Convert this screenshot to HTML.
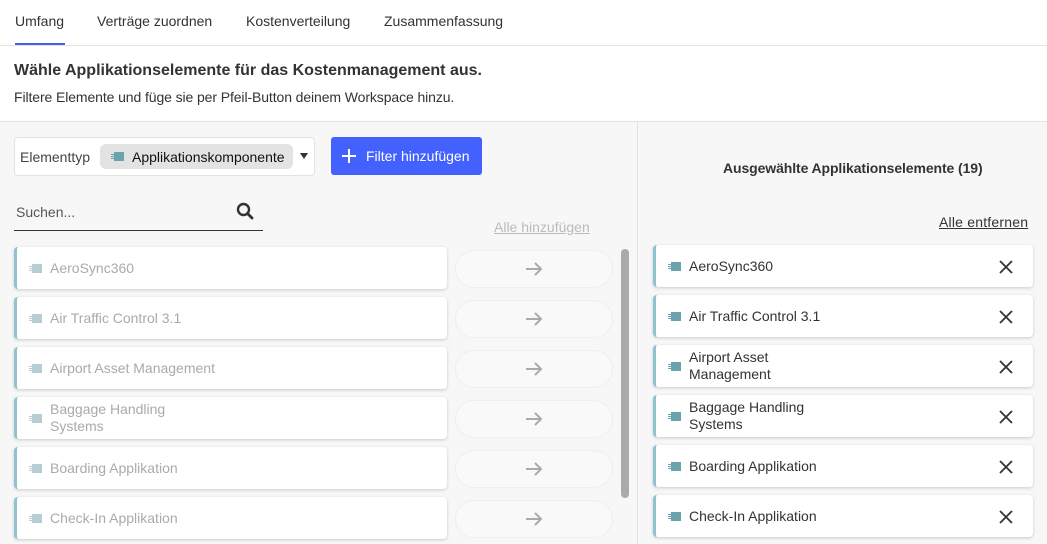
<!DOCTYPE html><html><head><style>
*{box-sizing:border-box;margin:0;padding:0}
body{width:1047px;height:544px;overflow:hidden;font-family:"Liberation Sans",sans-serif;background:#fff;position:relative;color:#333}
.a{position:absolute}
.tab{position:absolute;top:13px;font-size:14px;color:#333}
.card{position:absolute;background:#fff;border-radius:4px;box-shadow:0 1px 3px rgba(0,0,0,.18);border-left:3px solid #8fc3cf;height:42px;font-size:14px;display:flex;align-items:center}
.ic{display:inline-block;width:13px;height:9px;position:relative;margin-right:8px}
.ic:before{content:"";position:absolute;left:3px;top:0;width:10px;height:9px;background:currentColor}
.ic:after{content:"";position:absolute;left:0;top:2px;width:3px;height:1px;background:currentColor;box-shadow:0 2px 0 currentColor,0 4px 0 currentColor}
.pill{position:absolute;left:455px;width:158px;height:38px;border-radius:19px;border:1px solid #eee;background:#f9f9f9;display:flex;align-items:center;justify-content:center}
</style></head><body>
<div class="tab" style="left:15px">Umfang</div>
<div class="tab" style="left:97px">Verträge zuordnen</div>
<div class="tab" style="left:246px">Kostenverteilung</div>
<div class="tab" style="left:384px">Zusammenfassung</div>
<div class="a" style="left:15px;top:43px;width:50px;height:2px;background:#4361ee"></div>
<div class="a" style="left:0;top:45px;width:1047px;height:1px;background:#e3e3e3"></div>
<div class="a" style="left:14px;top:62px;font-size:16px;font-weight:bold;color:#333">Wähle Applikationselemente für das Kostenmanagement aus.</div>
<div class="a" style="left:14px;top:89px;font-size:14px;color:#333;letter-spacing:-0.1px">Filtere Elemente und füge sie per Pfeil-Button deinem Workspace hinzu.</div>
<div class="a" style="left:0;top:121px;width:1047px;height:423px;background:#f7f7f7;border-top:1px solid #e3e3e3"></div>
<div class="a" style="left:637px;top:121px;width:1px;height:423px;background:#e3e3e3"></div>
<div class="a" style="left:14px;top:137px;width:301px;height:39px;background:#fff;border:1px solid #e3e3e3;border-radius:4px"></div>
<div class="a" style="left:20px;top:149px;font-size:14px;color:#444">Elementtyp</div>
<div class="a" style="left:100px;top:144px;width:193px;height:25px;background:#e3e3e3;border-radius:6px;font-size:14px;color:#111;display:flex;align-items:center;padding-left:11px"><span class="ic" style="color:#6aa3ae"></span>Applikationskomponente</div>
<div class="a" style="left:300px;top:153px;width:0;height:0;border-left:4px solid transparent;border-right:4px solid transparent;border-top:6px solid #333"></div>
<div class="a" style="left:331px;top:137px;width:151px;height:38px;background:#4361ff;border-radius:3px;color:#fff;font-size:14px;display:flex;align-items:center;padding-left:10px"><svg width="16" height="16" style="margin-right:9px"><path d="M8 1V15M1 8H15" stroke="#fff" stroke-width="2"/></svg>Filter hinzufügen</div>
<div class="a" style="left:16px;top:204px;font-size:14px;color:#555">Suchen...</div>
<svg class="a" style="left:236px;top:202px" width="18" height="18" viewBox="0 0 18 18"><circle cx="7.5" cy="7.5" r="5.5" fill="none" stroke="#333" stroke-width="2.4"/><path d="M11.5 11.5L16 16" stroke="#333" stroke-width="2.8" stroke-linecap="round"/></svg>
<div class="a" style="left:14px;top:230px;width:249px;height:1px;background:#333"></div>
<div class="a" style="left:494px;top:219px;font-size:14px;color:#bbb;text-decoration:underline">Alle hinzufügen</div>
<div class="a" style="left:621px;top:249px;width:8px;height:249px;background:#aaa;border-radius:4px"></div>
<div class="a" style="left:723px;top:160px;font-size:14px;font-weight:bold;color:#333;letter-spacing:-0.1px">Ausgewählte Applikationselemente (19)</div>
<div class="a" style="left:939px;top:214px;font-size:14px;color:#333;text-decoration:underline;letter-spacing:0.2px">Alle entfernen</div>

<div class="card" style="left:14px;top:247px;width:433px;color:#aaa;padding-left:12px"><span class="ic" style="color:#b5ced3"></span>AeroSync360</div>
<div class="card" style="left:14px;top:297px;width:433px;color:#aaa;padding-left:12px"><span class="ic" style="color:#b5ced3"></span>Air Traffic Control 3.1</div>
<div class="card" style="left:14px;top:347px;width:433px;color:#aaa;padding-left:12px"><span class="ic" style="color:#b5ced3"></span>Airport Asset Management</div>
<div class="card" style="left:14px;top:397px;width:433px;color:#aaa;padding-left:12px;line-height:17px"><span class="ic" style="color:#b5ced3"></span>Baggage Handling<br>Systems</div>
<div class="card" style="left:14px;top:447px;width:433px;color:#aaa;padding-left:12px"><span class="ic" style="color:#b5ced3"></span>Boarding Applikation</div>
<div class="card" style="left:14px;top:497px;width:433px;color:#aaa;padding-left:12px"><span class="ic" style="color:#b5ced3"></span>Check-In Applikation</div>
<div class="pill" style="top:250px"><svg width="18" height="16"><path d="M1 8H16M10 2L16 8L10 14" fill="none" stroke="#aaa" stroke-width="2"/></svg></div>
<div class="pill" style="top:300px"><svg width="18" height="16"><path d="M1 8H16M10 2L16 8L10 14" fill="none" stroke="#aaa" stroke-width="2"/></svg></div>
<div class="pill" style="top:350px"><svg width="18" height="16"><path d="M1 8H16M10 2L16 8L10 14" fill="none" stroke="#aaa" stroke-width="2"/></svg></div>
<div class="pill" style="top:400px"><svg width="18" height="16"><path d="M1 8H16M10 2L16 8L10 14" fill="none" stroke="#aaa" stroke-width="2"/></svg></div>
<div class="pill" style="top:450px"><svg width="18" height="16"><path d="M1 8H16M10 2L16 8L10 14" fill="none" stroke="#aaa" stroke-width="2"/></svg></div>
<div class="pill" style="top:500px"><svg width="18" height="16"><path d="M1 8H16M10 2L16 8L10 14" fill="none" stroke="#aaa" stroke-width="2"/></svg></div>

<div class="card" style="left:653px;top:245px;width:380px;padding-left:12px;color:#333"><span class="ic" style="color:#6aa3ae"></span>AeroSync360</div>
<div class="card" style="left:653px;top:295px;width:380px;padding-left:12px;color:#333"><span class="ic" style="color:#6aa3ae"></span>Air Traffic Control 3.1</div>
<div class="card" style="left:653px;top:345px;width:380px;padding-left:12px;color:#333;line-height:17px"><span class="ic" style="color:#6aa3ae"></span>Airport Asset<br>Management</div>
<div class="card" style="left:653px;top:395px;width:380px;padding-left:12px;color:#333;line-height:17px"><span class="ic" style="color:#6aa3ae"></span>Baggage Handling<br>Systems</div>
<div class="card" style="left:653px;top:445px;width:380px;padding-left:12px;color:#333"><span class="ic" style="color:#6aa3ae"></span>Boarding Applikation</div>
<div class="card" style="left:653px;top:495px;width:380px;padding-left:12px;color:#333"><span class="ic" style="color:#6aa3ae"></span>Check-In Applikation</div>
<svg class="a" style="left:999px;top:260px" width="14" height="14"><path d="M1 1L13 13M13 1L1 13" stroke="#333" stroke-width="1.8"/></svg>
<svg class="a" style="left:999px;top:310px" width="14" height="14"><path d="M1 1L13 13M13 1L1 13" stroke="#333" stroke-width="1.8"/></svg>
<svg class="a" style="left:999px;top:360px" width="14" height="14"><path d="M1 1L13 13M13 1L1 13" stroke="#333" stroke-width="1.8"/></svg>
<svg class="a" style="left:999px;top:410px" width="14" height="14"><path d="M1 1L13 13M13 1L1 13" stroke="#333" stroke-width="1.8"/></svg>
<svg class="a" style="left:999px;top:460px" width="14" height="14"><path d="M1 1L13 13M13 1L1 13" stroke="#333" stroke-width="1.8"/></svg>
<svg class="a" style="left:999px;top:510px" width="14" height="14"><path d="M1 1L13 13M13 1L1 13" stroke="#333" stroke-width="1.8"/></svg>
</body></html>
